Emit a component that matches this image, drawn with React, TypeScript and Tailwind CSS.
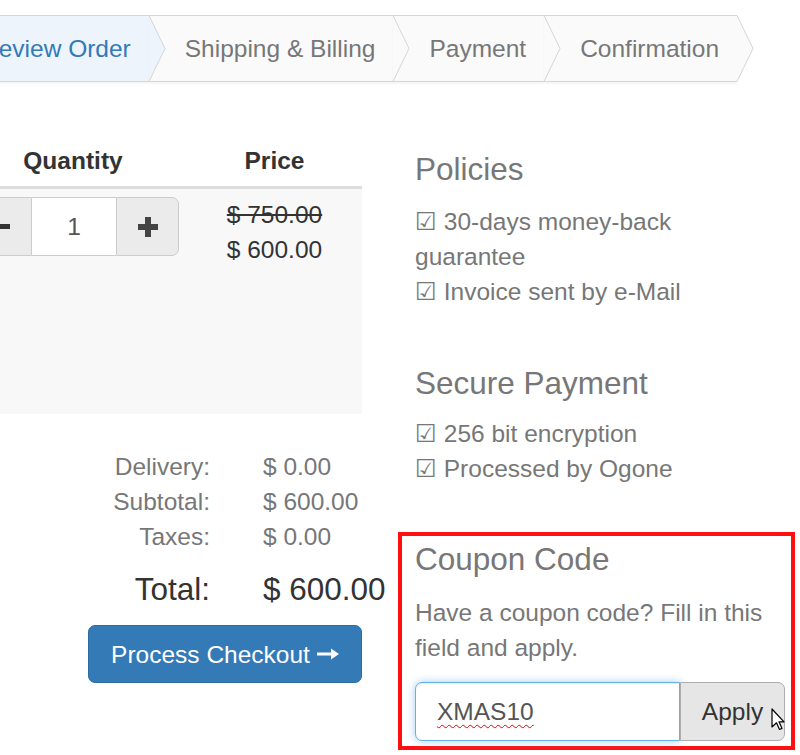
import React from "react";

function Step({ label, active, first }: { label: string; active?: boolean; first?: boolean }) {
  const fill = active ? "#eef4fc" : "#fafafa";
  return (
    <div
      className={`relative flex h-[67px] shrink-0 items-center border-y border-[#d6d6d6] shadow-[0_2px_2px_rgba(0,0,0,0.04)] ${
        active ? "bg-[#eef4fc] text-[#337ab7]" : "bg-[#fafafa] text-[#777]"
      } ${first ? "pl-[20px]" : "pl-[36px]"} pr-[18px] whitespace-nowrap`}
    >
      {label}
      <svg className="absolute left-full top-[-1px] z-10 h-[67px] w-[18px] overflow-visible" viewBox="0 0 18 67">
        <polygon points="0,0.5 16,33.5 0,66.5" fill={fill} />
        <polyline points="0,0.5 16,33.5 0,66.5" fill="none" stroke="#d6d6d6" strokeWidth="1" />
      </svg>
    </div>
  );
}

export default function App() {
  return (
    <div className="relative h-[755px] w-[800px] overflow-hidden bg-white font-['Liberation_Sans','DejaVu_Sans',sans-serif] text-[24.5px] leading-[35px] text-[#333]">
      {/* breadcrumb */}
      <div className="ml-[-39px] flex pt-[15px]">
        <Step label="Review Order" active first />
        <Step label="Shipping & Billing" />
        <Step label="Payment" />
        <Step label="Confirmation" />
      </div>

      <div className="mt-[53px] flex">
        {/* left column */}
        <div className="w-[362px] shrink-0">
          <div className="ml-[-41px] w-[403px]">
            <div className="flex border-b-[3px] border-[#ddd] font-bold">
              <div className="w-[228px] py-[8px] text-center">Quantity</div>
              <div className="flex-1 py-[8px] text-center">Price</div>
            </div>
            <div className="flex h-[225px] bg-[#f8f8f8]">
              <div className="w-[228px] px-[8px] pt-[8px]">
                <div className="flex h-[59px]">
                  <div className="flex w-[65px] items-center justify-center rounded-l-[7px] border border-[#ccc] bg-[#ebebeb]">
                    <svg width="20" height="6" viewBox="0 0 20 6">
                      <rect x="0" y="0" width="20" height="5" fill="#333" />
                    </svg>
                  </div>
                  <div className="flex flex-1 items-center justify-center border-y border-[#ccc] bg-white text-[#555]">1</div>
                  <div className="flex w-[63px] items-center justify-center rounded-r-[7px] border border-[#ccc] bg-[#ebebeb]">
                    <svg width="20" height="20" viewBox="0 0 20 20">
                      <rect x="7" y="0" width="6" height="20" fill="#444" />
                      <rect x="0" y="7" width="20" height="6" fill="#444" />
                    </svg>
                  </div>
                </div>
              </div>
              <div className="flex-1 pt-[8px] text-center">
                <div className="line-through">$ 750.00</div>
                <div>$ 600.00</div>
              </div>
            </div>
          </div>

          {/* summary */}
          <div className="mt-[35px] text-[#777]">
            <div className="flex">
              <div className="w-[210px] shrink-0 text-right">Delivery:</div>
              <div className="pl-[53px]">$ 0.00</div>
            </div>
            <div className="flex">
              <div className="w-[210px] shrink-0 text-right">Subtotal:</div>
              <div className="pl-[53px]">$ 600.00</div>
            </div>
            <div className="flex">
              <div className="w-[210px] shrink-0 text-right">Taxes:</div>
              <div className="pl-[53px]">$ 0.00</div>
            </div>
          </div>
          <div className="mt-[18px] flex text-[31.5px] leading-[35px] text-[#333]">
            <div className="w-[210px] shrink-0 text-right">Total:</div>
            <div className="shrink-0 whitespace-nowrap pl-[53px]">$ 600.00</div>
          </div>
          <div className="ml-[88px] mt-[18px] flex h-[58px] w-[274px] items-center justify-center gap-[7px] rounded-[7px] border border-[#2e6da4] bg-[#337ab7] text-white">
            <span>Process Checkout</span>
            <svg width="22" height="14" viewBox="0 0 22 14">
              <path d="M0 5.5 H14 V1.5 L22 7 L14 12.5 V8.5 H0 Z" fill="#fff" />
            </svg>
          </div>
        </div>

        {/* right column */}
        <div className="ml-[53px] w-[370px] shrink-0 text-[#777]">
          <h4 className="mt-[17px] text-[31.5px] leading-[34.6px]">Policies</h4>
          <div className="mt-[17px]">
            <div>☑ 30-days money-back guarantee</div>
            <div>☑ Invoice sent by e-Mail</div>
          </div>
          <h4 className="mt-[57px] text-[31.5px] leading-[34.6px]">Secure Payment</h4>
          <div className="mt-[16px]">
            <div>☑ 256 bit encryption</div>
            <div>☑ Processed by Ogone</div>
          </div>

          <div className="relative ml-[-17px] mt-[46px] w-[397px] border-4 border-[#ff1010] pb-[5px] pl-[13px] pr-[6px] pt-[6px]">
            <h4 className="text-[31.5px] leading-[34.6px]">Coupon Code</h4>
            <p className="mt-[18px]">Have a coupon code? Fill in this field and apply.</p>
            <div className="mt-[17px] flex h-[59px]">
              <div className="flex flex-1 items-center rounded-l-[7px] border border-[#66afe9] bg-white pl-[21px] text-[#555] shadow-[inset_0_1px_1px_rgba(0,0,0,0.075),0_0_8px_rgba(102,175,233,0.6)]">
                <span className="underline decoration-[#e00] decoration-wavy decoration-1 underline-offset-[4px]">XMAS10</span>
              </div>
              <div className="flex w-[105px] items-center justify-center rounded-r-[7px] border border-[#adadad] bg-[#e6e6e6] text-[#333]">
                Apply
              </div>
            </div>
            <svg className="absolute left-[369px] top-[172px]" width="14" height="24" viewBox="0 0 14 24">
              <path d="M1 1 L1 19 L5.5 14.8 L8.5 21.5 L11 20.4 L8 13.8 L13 13.8 Z" fill="#fff" stroke="#000" strokeWidth="1.2" strokeLinejoin="round" />
            </svg>
          </div>
        </div>
      </div>
    </div>
  );
}
